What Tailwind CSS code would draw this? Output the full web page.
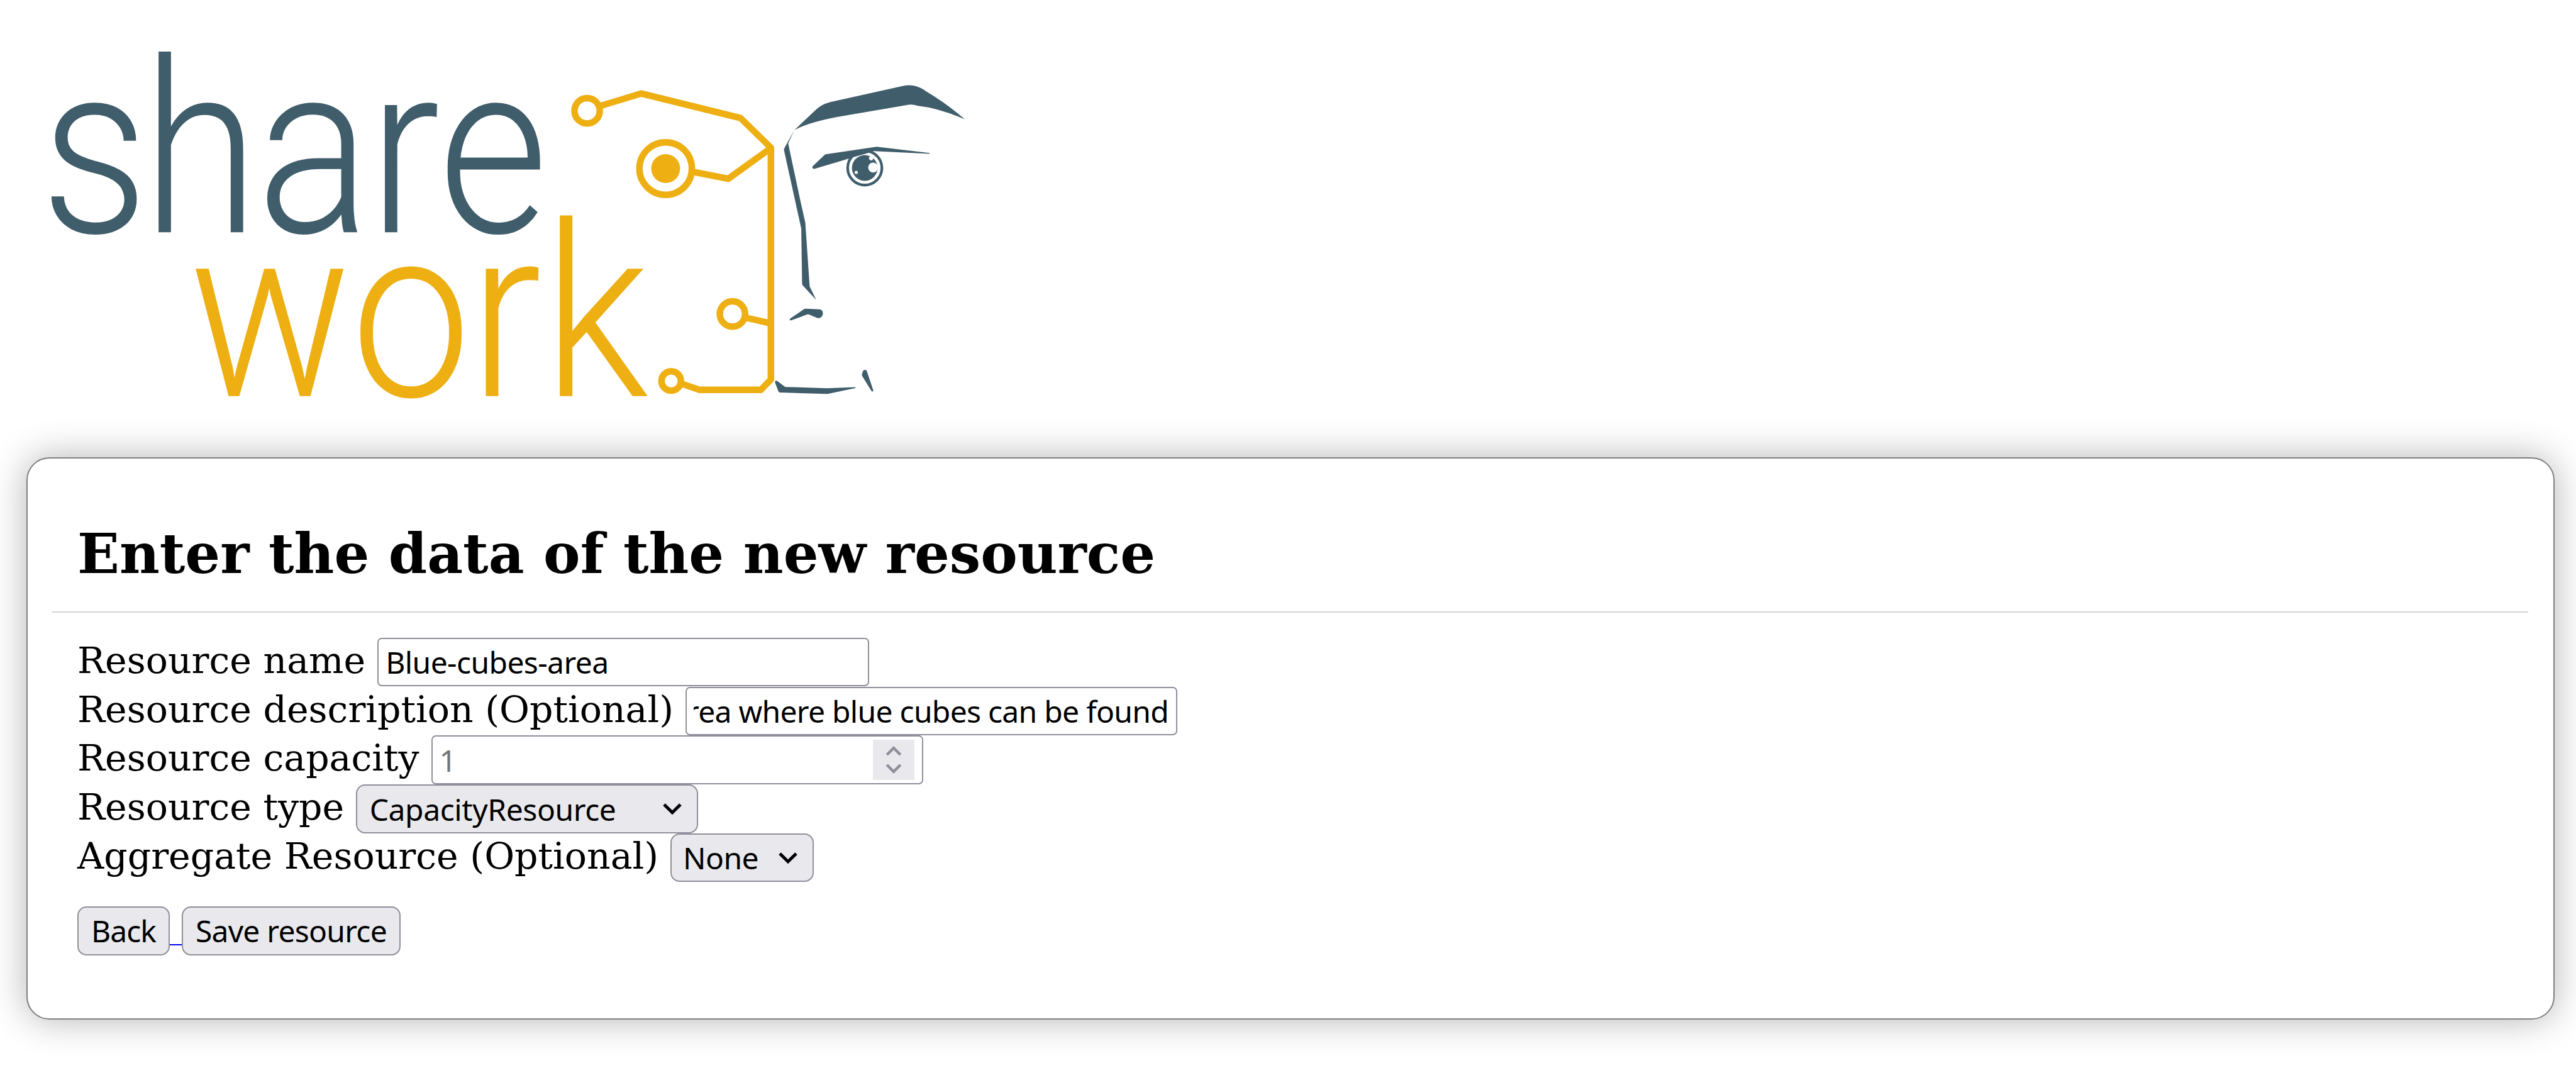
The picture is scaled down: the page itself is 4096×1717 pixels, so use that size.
<!DOCTYPE html>
<html lang="en">
<head>
<meta charset="utf-8">
<title>Sharework - New resource</title>
<script src="https://cdn.jsdelivr.net/npm/@tailwindcss/browser@4"></script>
</head>
<body class="h-[1717px] bg-white text-black overflow-hidden">
<header class="h-[727.400px]">
  <svg class="block w-[1601.25px] h-[694px]" viewBox="0 0 3000 1300" preserveAspectRatio="xMinYMin meet" role="img" aria-label="share work">
    <!-- wordmark -->
    <g font-family="Roboto" font-weight="300" font-size="718">
      <text transform="scale(.88 1)" y="692" x="138.7 482 869.4 1248.2 1483.9" fill="#405d6b">share</text>
      <text transform="scale(.89 1)" y="1180" x="633 1174.6 1571.4 1819" fill="#eeaf12">work</text>
    </g>
    <!-- circuit half of the face -->
    <g fill="none" stroke="#eeaf12" stroke-width="19.5" stroke-linejoin="round">
      <circle cx="1749" cy="330" r="37.7"/>
      <path d="M1790 315 1910 278.5 2206 351.5 2296.5 440V1130.5L2267 1161H2083L2035 1144.5"/>
      <circle cx="1983" cy="502" r="78.2"/>
      <path d="M2068 512.5 2169.500 532.500 2296.500 441"/>
      <circle cx="2182" cy="935.2" r="37.7"/>
      <path d="M2225 947 2296.5 963.3"/>
      <circle cx="1999.5" cy="1134.800" r="28.9"/>
    </g>
    <circle cx="1983" cy="502" r="43" fill="#eeaf12"/>
    <!-- human half of the face -->
    <g fill="#405d6b">
      <path d="M2365.800 388.300 2427 330Q2446 311 2473.700 304L2689 256Q2708 251.500 2727 256 2737 258.500 2750.500 266L2759 272Q2817 306 2874.300 355.300 2798 322 2734.700 315 2715 309 2699 313.300L2493.500 348.300Q2402 366 2365.800 388.300L2348 427.300 2384.800 600 2399 663.400 2412 853.500 2431.700 893.700 2391 849.500Q2389.500 847.500 2389.500 845L2387 680.800 2335.700 448Q2335 444.500 2336.500 441.500Z"/>
      <circle cx="2576.2" cy="500.300" r="51" fill="none" stroke="#405d6b" stroke-width="8"/>
      <circle cx="2576.2" cy="500.300" r="38.300"/>
      <circle cx="2601" cy="499" r="14.700" fill="#fff"/>
      <path d="M2589.500 468 2592.500 464 2602 471.500 2601 474A6.300 6.300 0 1 1 2589.500 468Z" fill="#fff"/>
      <circle cx="2550.800" cy="513.300" r="4.800" fill="#fff"/>
      <path d="M2421.500 494.500 2457 461Q2458 460 2460 459.600L2609 437.300Q2612 436.800 2615 437.300L2769.500 455.700V458L2604 450 2589 455 2540 469 2427.500 502.800C2421 504 2418 499 2421.500 494.500Z"/>
      <path d="M2354.500 948.500 2395 921Q2397 919.200 2400 919.300L2441 921.500C2448 922 2451.500 927 2451.500 934 2450 944 2443 950 2433.500 946.500L2410 937Q2407.500 935.500 2404 937L2357 954.300C2353 955 2351 951.500 2354.500 948.500Z"/>
      <path d="M2309 1139.500C2308 1134 2312.500 1132.500 2315.500 1135L2337.500 1151.500Q2339 1152.500 2341 1152.500L2463.500 1156.300 2547.500 1153.300Q2549.500 1154.800 2548 1156L2468 1172.700Q2465 1173.300 2462 1173.200L2323.500 1169.300Q2320 1169 2318.500 1165Z"/>
      <path d="M2570.500 1106.500C2572.500 1100 2581 1100.500 2582.500 1106L2601.500 1162.500C2602 1166 2598 1167.500 2596 1164.500L2568.500 1120Q2567 1117 2567.800 1114.500Z"/>
    </g>
  </svg>
</header>

<main class="ml-[42px] w-[4020.400px] h-[894px] rounded-[36.500px] border-2 border-[#808080] bg-white shadow-[0_0_58px_rgba(0,0,0,0.3)] pt-[101px] pl-[39px] pr-[40px] font-['DejaVu_Serif',serif]">
  <h1 class="pl-10 text-[87.800px] leading-[102px] font-bold whitespace-nowrap">Enter the data of the new resource</h1>
  <hr class="mt-10 border-0 h-[2px] bg-[#d3d3d3]">

  <form class="mt-[39.600px] pl-10 text-[58.500px] leading-[73.900px] whitespace-nowrap">
    <div class="flex h-[77.700px] items-start gap-[19px]">
      <label for="name">Resource name</label>
      <input id="name" type="text" value="Blue-cubes-area" class="block h-[77.400px] w-[781.500px] rounded-[7px] border-2 border-[#8f8f9d] bg-white px-[11px] py-0 font-['Noto_Sans',sans-serif] text-[48px] tracking-[-0.600px] leading-[73px]">
    </div>
    <div class="flex h-[77.800px] items-start gap-[19px]">
      <span>Resource description (Optional)</span>
      <div class="h-[77.700px] w-[782px] rounded-[7px] border-2 border-[#8f8f9d] bg-white pl-[11px] pr-[12px]">
        <div class="flex h-full justify-end overflow-hidden font-['Noto_Sans',sans-serif] text-[48px] tracking-[-0.720px] leading-[73px]">Area where blue cubes can be found</div>
      </div>
    </div>
    <div class="flex h-[77.900px] items-start gap-[19px]">
      <span>Resource capacity</span>
      <div class="flex h-[77.700px] w-[782px] items-center justify-between rounded-[7px] border-2 border-[#8f8f9d] bg-white pl-[11px] pr-[11.500px] font-['Noto_Sans',sans-serif] text-[48px] leading-[73px] text-[#757575]">
        <span>1</span>
        <svg class="block h-[64px] w-[66px] bg-[#e9e9ed]" viewBox="0 0 66 64" fill="none" stroke="#8f8f9d" stroke-width="4.500"><path d="M22.200 24 33 13.200 43.800 24M22.200 40 33 50.800 43.800 40"/></svg>
      </div>
    </div>
    <div class="flex h-[77.500px] items-start gap-[19px]">
      <span>Resource type</span>
      <div class="flex h-[77.400px] w-[543.400px] items-center justify-between rounded-[14.500px] border-2 border-[#8f8f9d] bg-[#e9e9ed] pl-[19.500px] pr-[24px] font-['Noto_Sans',sans-serif] text-[48px] tracking-[-0.420px] leading-[73px]">
        <span>CapacityResource</span>
        <svg class="block h-[20px] w-[30px]" viewBox="0 0 30 20" fill="none" stroke="#000" stroke-width="5"><path d="M2 3 15 15.800 28 3"/></svg>
      </div>
    </div>
    <div class="flex h-[77.300px] items-start gap-[19px]">
      <span>Aggregate Resource (Optional)</span>
      <div class="flex h-[77.300px] w-[227.800px] items-center justify-between rounded-[14.500px] border-2 border-[#8f8f9d] bg-[#e9e9ed] pl-[18px] pr-[23.500px] font-['Noto_Sans',sans-serif] text-[48px] tracking-[-0.600px] leading-[73px]">
        <span>None</span>
        <svg class="block h-[20px] w-[30px]" viewBox="0 0 30 20" fill="none" stroke="#000" stroke-width="5"><path d="M2 3 15 15.800 28 3"/></svg>
      </div>
    </div>
    <div class="mt-[39px] flex font-['Noto_Sans',sans-serif] text-[48px] leading-[73px]">
      <button type="button" class="h-[77.500px] w-[147px] rounded-[14.500px] border-2 border-[#8f8f9d] bg-[#e9e9ed] text-center tracking-[-0.900px]">Back</button>
      <span class="mt-[60px] h-[2px] w-[18.800px] bg-[#0000ee]"></span>
      <button type="button" class="h-[77.500px] w-[348.300px] rounded-[14.500px] border-2 border-[#8f8f9d] bg-[#e9e9ed] text-center tracking-[-0.750px]">Save resource</button>
    </div>
  </form>
</main>
</body>
</html>
